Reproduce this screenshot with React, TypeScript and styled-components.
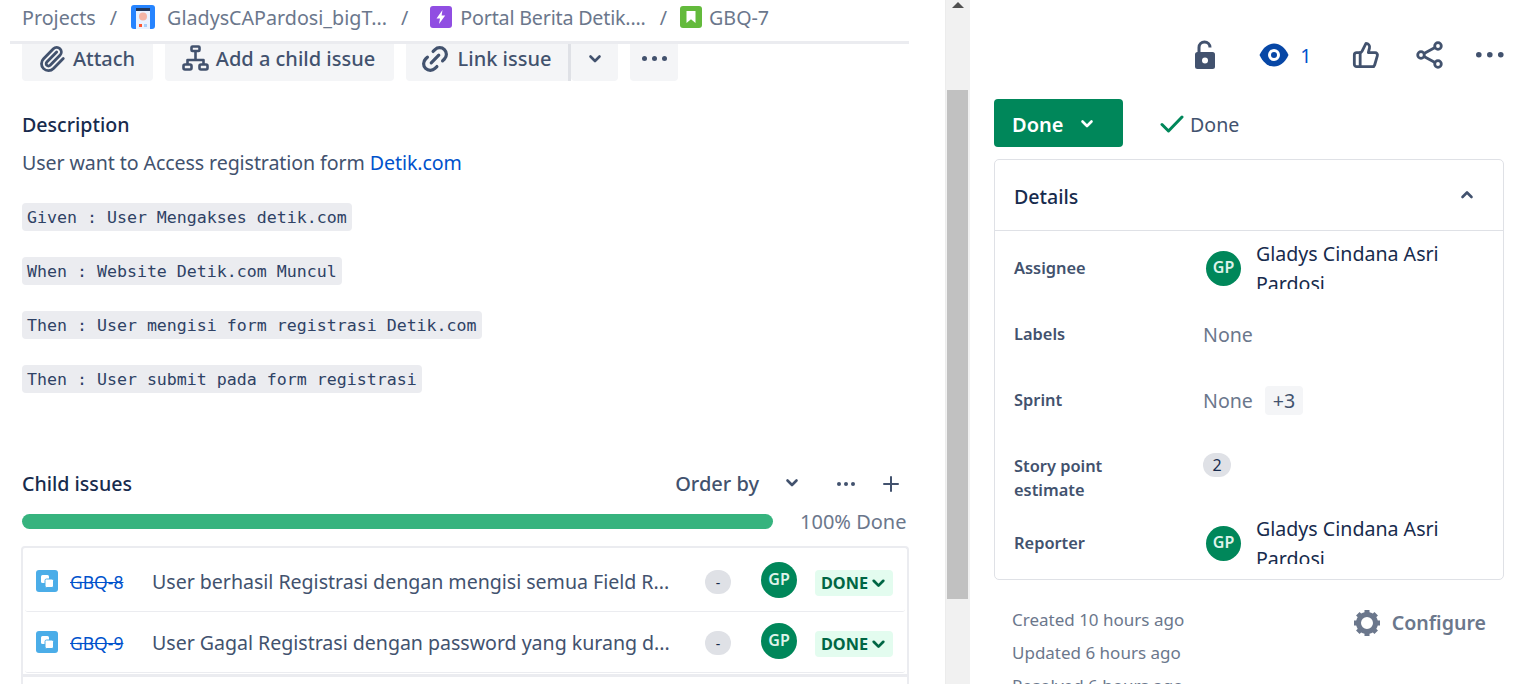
import styled, { createGlobalStyle } from "styled-components";
import { Paperclip, Link2, ThumbsUp, Plus } from "lucide-react";

const GlobalStyle = createGlobalStyle`
    html, body {
        margin: 0;
        padding: 0;
        height: 100%;
        background: #fff;
        overflow: hidden;
    }
    * {
        box-sizing: border-box;
    }
    body {
        font-family: "Noto Sans", "Open Sans", sans-serif;
        color: #42526e;
    }
`;

const Page = styled.div`
    width: 1534px;
    height: 684px;
    display: flex;
    overflow: hidden;
`;

const Main = styled.main`
    width: 945px;
    flex: none;
    padding-left: 10px;
    overflow: hidden;
`;

const Breadcrumbs = styled.nav`
    width: 899px;
    height: 44px;
    padding: 0 0 7px 12px;
    display: flex;
    align-items: center;
    border-bottom: 3px solid #ebecf0;
    font-size: 19.7px;
    color: #6b778c;
`;

const Crumb = styled.span<{ $gap?: number; $tight?: boolean }>`
    display: flex;
    align-items: center;
    gap: ${p => p.$gap ?? 0}px;
    letter-spacing: ${p => (p.$tight ? "-0.2px" : "normal")};
    white-space: nowrap;
`;

const Slash = styled.span<{ $after?: number }>`
    margin: 0 ${p => p.$after ?? 14}px 0 14px;
`;

const Toolbar = styled.div`
    display: flex;
    height: 37px;
    padding-left: 12px;
    gap: 12px;
`;

const ToolGroup = styled.div`
    display: flex;
`;

const ToolButton = styled.div<{ $w: number; $split?: boolean; $shift?: number }>`
    width: ${p => p.$w}px;
    height: 37px;
    padding: 0 ${p => p.$shift ?? 0}px 8px 0;
    display: flex;
    align-items: center;
    justify-content: center;
    gap: 7px;
    background: #f4f5f7;
    border-radius: ${p => (p.$split ? "0 0 0 4px" : "0 0 4px 4px")};
    border-right: ${p => (p.$split ? "3px solid #dfe1e6" : "none")};
    font-size: 20px;
    font-weight: 500;
    color: #42526e;
    white-space: nowrap;
`;

const Section = styled.section`
    padding-left: 12px;
`;

const Heading = styled.h2`
    margin: 0;
    font-size: 19.6px;
    line-height: 28px;
    font-weight: 500;
    color: #172b4d;
`;

const DescHeading = styled(Heading)`
    margin-top: 30px;
`;

const DetailsTitle = styled(Heading)`
    padding-top: 4px;
`;

const Body = styled.p`
    margin: 10px 0 0;
    font-size: 19.6px;
    line-height: 28px;
    letter-spacing: -0.09px;
    color: #42526e;
`;

const Anchor = styled.span`
    color: #0052cc;
`;

const CodeList = styled.div`
    margin-top: 26px;
    display: flex;
    flex-direction: column;
    align-items: flex-start;
    gap: 26px;
`;

const CodeChip = styled.code`
    height: 28px;
    padding: 0 5px;
    display: flex;
    align-items: center;
    background: #ebecf0;
    border-radius: 4px;
    font-family: "DejaVu Sans Mono", "Liberation Mono", monospace;
    font-size: 16.6px;
    color: #2f4265;
    white-space: pre;
`;

const ChildHeader = styled.div`
    margin-top: 77px;
    width: 881px;
    height: 28px;
    display: flex;
    align-items: center;
`;

const OrderBy = styled.div`
    margin-left: auto;
    padding-bottom: 2px;
    display: flex;
    align-items: center;
    font-size: 20px;
    font-weight: 500;
    color: #42526e;
    gap: 25px;
`;

const HeaderIcons = styled.div`
    margin-left: 37px;
    display: flex;
    align-items: center;
    gap: 24px;
`;

const ProgressRow = styled.div`
    margin-top: 9px;
    display: flex;
    align-items: center;
    height: 28px;
`;

const ProgressBar = styled.div`
    width: 751px;
    height: 15px;
    border-radius: 8px;
    background: #36b37e;
`;

const ProgressLabel = styled.span`
    margin-left: 27px;
    font-size: 20px;
    color: #6b778c;
    white-space: nowrap;
`;

const IssueCard = styled.div`
    margin: 11px 0 0 -1px;
    width: 888px;
    height: 200px;
    padding: 3px 2px 0;
    border: 2px solid #ebecf0;
    border-bottom: none;
    border-radius: 4px 4px 0 0;
    background: #fff;
`;

const IssueRow = styled.div`
    height: 61px;
    display: flex;
    align-items: center;
    background: #fff;
    padding-left: 11px;
    border-bottom: 1px solid #ebecf0;
    border-radius: 3px;
`;

const CardRule = styled.div`
    margin: 1px -2px 0;
    height: 3px;
    background: #ebecf0;
`;

const IssueIcon = styled.svg`
    flex: none;
    width: 22px;
    height: 22px;
`;

const IssueKey = styled.span`
    margin: 1px 0 0 12px;
    width: 82px;
    flex: none;
    font-size: 17.5px;
    color: #0052cc;
    text-decoration: line-through;
`;

const IssueSummary = styled.span`
    width: 518px;
    flex: none;
    font-size: 19.6px;
    letter-spacing: -0.03px;
    color: #42526e;
    white-space: nowrap;
`;

const Dash = styled.span`
    margin: 2px 0 0 35px;
    width: 26px;
    height: 24px;
    flex: none;
    border-radius: 12px;
    background: #dfe1e6;
    display: flex;
    align-items: center;
    justify-content: center;
    font-size: 14px;
    color: #172b4d;
`;

const Avatar = styled.span<{ $size: number }>`
    width: ${p => p.$size}px;
    height: ${p => p.$size}px;
    flex: none;
    padding-bottom: 2px;
    border-radius: 50%;
    background: #00875a;
    color: #dff3ea;
    font-size: 16px;
    font-weight: 600;
    display: flex;
    align-items: center;
    justify-content: center;
`;

const RowAvatar = styled(Avatar)`
    margin: -2px 0 0 30px;
`;

const StatusLozenge = styled.span`
    margin: 4px 0 0 18px;
    width: 78px;
    height: 26px;
    flex: none;
    border-radius: 4px;
    background: #e3fcef;
    color: #006644;
    font-size: 16.3px;
    font-weight: 700;
    display: flex;
    align-items: center;
    justify-content: center;
    gap: 2px;
`;

const Scrollbar = styled.div`
    width: 25px;
    flex: none;
    background: #f1f1f1;
    padding: 0 2px 0 1px;
    border-left: 1px solid #ececec;
`;

const ScrollArrow = styled.div`
    height: 90px;
    padding-top: 2px;
    display: flex;
    justify-content: center;
    align-items: flex-start;
`;

const ArrowUp = styled.span`
    width: 0;
    height: 0;
    border-left: 6px solid transparent;
    border-right: 6px solid transparent;
    border-bottom: 6px solid #505050;
`;

const ScrollThumb = styled.div`
    height: 509px;
    background: #c1c1c1;
`;

const Aside = styled.aside`
    flex: 1;
    padding: 0 30px 0 24px;
    overflow: hidden;
`;

const ActionBar = styled.div`
    height: 99px;
    padding-top: 38px;
    display: flex;
    align-items: flex-start;
    justify-content: flex-end;
`;

const ActionIcon = styled.span<{ $gap: number }>`
    display: flex;
    align-items: center;
    margin-left: ${p => p.$gap}px;
    height: 34px;
`;

const WatchCount = styled.span`
    margin-left: 11px;
    font-size: 19.6px;
    color: #0052cc;
`;

const StatusRow = styled.div`
    display: flex;
    align-items: center;
`;

const StatusButton = styled.div`
    width: 129px;
    height: 48px;
    border-radius: 4px;
    background: #00875a;
    color: #fff;
    font-size: 20px;
    font-weight: 600;
    display: flex;
    align-items: center;
    padding: 2px 0 0 18px;
    gap: 16px;
`;

const Resolution = styled.span`
    margin-left: 37px;
    padding-top: 2px;
    display: flex;
    align-items: center;
    gap: 6px;
    font-size: 19.6px;
    color: #42526e;
`;

const DetailsPanel = styled.div`
    margin-top: 12px;
    height: 421px;
    border: 1px solid #dfe1e6;
    border-radius: 5px;
`;

const DetailsHeader = styled.div`
    height: 71px;
    padding: 0 28px 0 19px;
    display: flex;
    align-items: center;
    justify-content: space-between;
    border-bottom: 1px solid #dfe1e6;
`;

const FieldRow = styled.div<{ $h: number }>`
    height: ${p => p.$h}px;
    padding-left: 19px;
    display: flex;
    align-items: center;
`;

const FieldLabel = styled.div`
    width: 189px;
    flex: none;
    font-size: 16.4px;
    line-height: 24px;
    font-weight: 600;
    color: #42526e;
`;

const Person = styled.div`
    display: flex;
    align-items: center;
    margin-left: 3px;
    gap: 15px;
`;

const PersonName = styled.div`
    width: 220px;
    height: 50px;
    margin-bottom: 8px;
    overflow: hidden;
    font-size: 19.6px;
    line-height: 30px;
    color: #172b4d;
`;

const NoneText = styled.span`
    font-size: 19.6px;
    color: #6b778c;
`;

const MoreBadge = styled.span`
    margin-left: 12px;
    height: 29px;
    width: 38px;
    border-radius: 4px;
    background: #f4f5f7;
    display: flex;
    align-items: center;
    justify-content: center;
    font-size: 19.6px;
    color: #42526e;
`;

const PointsBadge = styled.span`
    width: 28px;
    height: 24px;
    margin-bottom: 26px;
    border-radius: 12px;
    background: #dfe1e6;
    display: flex;
    align-items: center;
    justify-content: center;
    font-size: 16px;
    color: #172b4d;
`;

const Footer = styled.div`
    margin-top: 23px;
    padding: 0 18px;
    display: flex;
    justify-content: space-between;
`;

const Dates = styled.div`
    font-size: 17px;
    line-height: 33px;
    color: #6b778c;
`;

const Configure = styled.div`
    margin-top: 3px;
    display: flex;
    align-items: center;
    gap: 11px;
    height: 33px;
    font-size: 19.6px;
    font-weight: 600;
    color: #6b778c;
`;

const Chevron = ({ up = false, color = "#42526e", size = 16 }: { up?: boolean; color?: string; size?: number }) => (
    <svg width={size} height={size} viewBox="0 0 16 16" fill="none">
        <path
            d={up ? "M3.5 10 8 5.500l4.500 4.500" : "M3.5 5.500 8 10l4.500-4.500"}
            stroke={color}
            strokeWidth="2.6"
            strokeLinecap="round"
            strokeLinejoin="round"
        />
    </svg>
);

const Dots = ({ r = 2.8, gap = 11 }: { r?: number; gap?: number }) => (
    <svg width={gap * 2 + r * 2} height={r * 2} viewBox={`0 0 ${gap * 2 + r * 2} ${r * 2}`} fill="#42526e">
        <circle cx={r} cy={r} r={r} />
        <circle cx={r + gap} cy={r} r={r} />
        <circle cx={r + gap * 2} cy={r} r={r} />
    </svg>
);

const ProjectAvatar = () => (
    <svg width="24" height="24" viewBox="0 0 24 24" style={{ flex: "none" }}>
        <rect width="24" height="24" rx="3" fill="#2684ff" />
        <rect x="5" y="3" width="14" height="21" fill="#eaf2ff" />
        <rect x="5" y="3" width="14" height="3" fill="#253858" />
        <circle cx="12" cy="11.500" r="4" fill="#f5b5a5" />
        <rect x="8" y="19" width="3" height="3" fill="#ff5630" />
        <rect x="13" y="19" width="3" height="3" fill="#a9cdf7" />
    </svg>
);

const EpicAvatar = () => (
    <svg width="22" height="22" viewBox="0 0 22 22" style={{ flex: "none" }}>
        <rect width="22" height="22" rx="3" fill="#904ee2" />
        <path d="M12.500 4 6.500 12.500H10L9 18l6.200-8.500h-3.600z" fill="#fff" />
    </svg>
);

const StoryAvatar = () => (
    <svg width="22" height="22" viewBox="0 0 22 22" style={{ flex: "none" }}>
        <rect width="22" height="22" rx="3" fill="#63ba3c" />
        <path d="M6.500 5h9v12L11 13.200 6.500 17z" fill="#fff" />
    </svg>
);

const Hierarchy = () => (
    <svg width="27" height="27" viewBox="0 0 27 27" fill="none" stroke="#42526e" strokeWidth="2.6" strokeLinejoin="round">
        <rect x="9.500" y="1.500" width="8" height="4.500" rx="1" />
        <path d="M13.500 6v9M5.500 19v-4h16v4" />
        <rect x="1.500" y="19.500" width="8" height="5" rx="1.500" />
        <rect x="17.500" y="19.500" width="8" height="5" rx="1.500" />
    </svg>
);

const SubtaskIcon = () => (
    <IssueIcon viewBox="0 0 22 22">
        <rect width="22" height="22" rx="3" fill="#4bade8" />
        <rect x="5" y="5" width="8" height="8" rx="1.500" fill="#fff" />
        <rect x="9" y="9" width="8.500" height="8.500" rx="1.500" fill="#fff" stroke="#4bade8" strokeWidth="1" />
    </IssueIcon>
);

const LockOpen = () => (
    <svg width="22" height="30" viewBox="0 0 22 30">
        <path d="M5 13V7.500a5.500 5.500 0 0 1 11 0" fill="none" stroke="#42526e" strokeWidth="3" />
        <rect x="1" y="12" width="20" height="17" rx="2.500" fill="#42526e" />
        <circle cx="11" cy="20.500" r="3" fill="#fff" />
    </svg>
);

const Eye = () => (
    <svg width="30" height="24" viewBox="0 0 30 24">
        <path d="M0.500 12C4 4.500 9 .5 15 .5S26 4.500 29.500 12C26 19.500 21 23.500 15 23.500S4 19.500.5 12z" fill="#0747a6" />
        <circle cx="15" cy="12" r="6" fill="#fff" />
        <circle cx="15" cy="12" r="3" fill="#0747a6" />
    </svg>
);

const Share = () => (
    <svg width="28" height="28" viewBox="0 0 28 28" fill="none" stroke="#42526e" strokeWidth="2.800">
        <circle cx="22" cy="5" r="3.300" />
        <circle cx="22" cy="23" r="3.300" />
        <circle cx="5" cy="14" r="3.300" />
        <path d="M8 12.400 19 6.500M8 15.600 19 21.500" />
    </svg>
);

const Check = () => (
    <svg width="24" height="20" viewBox="0 0 24 20" fill="none">
        <path d="M2 10.500 8.500 17 22 3" stroke="#00875a" strokeWidth="3" strokeLinecap="round" strokeLinejoin="round" />
    </svg>
);

const Gear = () => (
    <svg width="28" height="28" viewBox="0 0 28 28" fill="none">
        <circle cx="14" cy="14" r="8.500" stroke="#6b778c" strokeWidth="5" />
        <g stroke="#6b778c" strokeWidth="5" strokeLinecap="butt">
            <path d="M14 1v4M14 23v4M1 14h4M23 14h4M4.800 4.800l2.800 2.800M20.400 20.400l2.800 2.800M23.200 4.800l-2.800 2.800M7.600 20.400l-2.800 2.800" />
        </g>
    </svg>
);

const codeLines = [
    "Given : User Mengakses detik.com",
    "When : Website Detik.com Muncul",
    "Then : User mengisi form registrasi Detik.com",
    "Then : User submit pada form registrasi",
];

const childIssues = [
    { key: "GBQ-8", summary: "User berhasil Registrasi dengan mengisi semua Field R..." },
    { key: "GBQ-9", summary: "User Gagal Registrasi dengan password yang kurang d..." },
];

export default function App() {
    return (
        <Page>
            <GlobalStyle />
            <Main>
                <Breadcrumbs>
                    <Crumb>Projects</Crumb>
                    <Slash>/</Slash>
                    <Crumb $gap={12}>
                        <ProjectAvatar />
                        GladysCAPardosi_bigT...
                    </Crumb>
                    <Slash $after={22}>/</Slash>
                    <Crumb $gap={8} $tight>
                        <EpicAvatar />
                        Portal Berita Detik....
                    </Crumb>
                    <Slash $after={13}>/</Slash>
                    <Crumb $gap={7}>
                        <StoryAvatar />
                        GBQ-7
                    </Crumb>
                </Breadcrumbs>

                <Toolbar>
                    <ToolButton $w={131} $shift={2}>
                        <Paperclip size={28} strokeWidth={2.4} color="#42526e" />
                        Attach
                    </ToolButton>
                    <ToolButton $w={229} $shift={2}>
                        <Hierarchy />
                        Add a child issue
                    </ToolButton>
                    <ToolGroup>
                        <ToolButton $w={165} $split $shift={4}>
                            <Link2 size={32} strokeWidth={2.4} color="#42526e" style={{ transform: "rotate(-45deg)" }} />
                            Link issue
                        </ToolButton>
                        <ToolButton $w={47}>
                            <Chevron />
                        </ToolButton>
                    </ToolGroup>
                    <ToolButton $w={48}>
                        <Dots r={2.5} gap={10} />
                    </ToolButton>
                </Toolbar>

                <Section>
                    <DescHeading>Description</DescHeading>
                    <Body>
                        User want to Access registration form <Anchor>Detik.com</Anchor>
                    </Body>
                    <CodeList>
                        {codeLines.map(line => (
                            <CodeChip key={line}>{line}</CodeChip>
                        ))}
                    </CodeList>

                    <ChildHeader>
                        <Heading>Child issues</Heading>
                        <OrderBy>
                            Order by
                            <Chevron />
                        </OrderBy>
                        <HeaderIcons>
                            <Dots r={2} gap={7} />
                            <Plus size={24} strokeWidth={2} color="#42526e" />
                        </HeaderIcons>
                    </ChildHeader>

                    <ProgressRow>
                        <ProgressBar />
                        <ProgressLabel>100% Done</ProgressLabel>
                    </ProgressRow>

                    <IssueCard>
                        {childIssues.map(issue => (
                            <IssueRow key={issue.key}>
                                <SubtaskIcon />
                                <IssueKey>{issue.key}</IssueKey>
                                <IssueSummary>{issue.summary}</IssueSummary>
                                <Dash>-</Dash>
                                <RowAvatar $size={36}>GP</RowAvatar>
                                <StatusLozenge>
                                    DONE
                                    <Chevron color="#006644" size={17} />
                                </StatusLozenge>
                            </IssueRow>
                        ))}
                        <CardRule />
                    </IssueCard>
                </Section>
            </Main>

            <Scrollbar>
                <ScrollArrow>
                    <ArrowUp />
                </ScrollArrow>
                <ScrollThumb />
            </Scrollbar>

            <Aside>
                <ActionBar>
                    <ActionIcon $gap={0}>
                        <LockOpen />
                    </ActionIcon>
                    <ActionIcon $gap={43}>
                        <Eye />
                        <WatchCount>1</WatchCount>
                    </ActionIcon>
                    <ActionIcon $gap={41}>
                        <ThumbsUp size={28} strokeWidth={2.4} color="#42526e" />
                    </ActionIcon>
                    <ActionIcon $gap={36}>
                        <Share />
                    </ActionIcon>
                    <ActionIcon $gap={32}>
                        <Dots />
                    </ActionIcon>
                </ActionBar>

                <StatusRow>
                    <StatusButton>
                        Done
                        <Chevron color="#fff" />
                    </StatusButton>
                    <Resolution>
                        <Check />
                        Done
                    </Resolution>
                </StatusRow>

                <DetailsPanel>
                    <DetailsHeader>
                        <DetailsTitle>Details</DetailsTitle>
                        <Chevron up />
                    </DetailsHeader>
                    <FieldRow $h={74}>
                        <FieldLabel>Assignee</FieldLabel>
                        <Person>
                            <Avatar $size={35}>GP</Avatar>
                            <PersonName>Gladys Cindana Asri Pardosi</PersonName>
                        </Person>
                    </FieldRow>
                    <FieldRow $h={58}>
                        <FieldLabel>Labels</FieldLabel>
                        <NoneText>None</NoneText>
                    </FieldRow>
                    <FieldRow $h={74}>
                        <FieldLabel>Sprint</FieldLabel>
                        <NoneText>None</NoneText>
                        <MoreBadge>+3</MoreBadge>
                    </FieldRow>
                    <FieldRow $h={82}>
                        <FieldLabel>
                            Story point
                            <br />
                            estimate
                        </FieldLabel>
                        <PointsBadge>2</PointsBadge>
                    </FieldRow>
                    <FieldRow $h={48}>
                        <FieldLabel>Reporter</FieldLabel>
                        <Person>
                            <Avatar $size={35}>GP</Avatar>
                            <PersonName>Gladys Cindana Asri Pardosi</PersonName>
                        </Person>
                    </FieldRow>
                </DetailsPanel>

                <Footer>
                    <Dates>
                        Created 10 hours ago
                        <br />
                        Updated 6 hours ago
                        <br />
                        Resolved 6 hours ago
                    </Dates>
                    <Configure>
                        <Gear />
                        Configure
                    </Configure>
                </Footer>
            </Aside>
        </Page>
    );
}
